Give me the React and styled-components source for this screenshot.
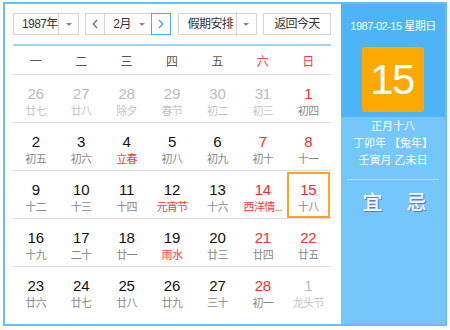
import React from "react";
import styled, { createGlobalStyle, css } from "styled-components";

const Global = createGlobalStyle`
  html, body { margin: 0; padding: 0; background: #fff; }
  body { font-family: "Liberation Sans", "Noto Sans CJK SC", sans-serif; }
  * { box-sizing: border-box; }
`;

const FONT = `"Liberation Sans", "Noto Sans CJK SC", sans-serif`;

const Frame = styled.div`
  margin: 2px 0 0 3px;
  width: 444px;
  height: 324px;
  border: 2px solid #68bdf7;
  display: flex;
  font-family: ${FONT};
`;

const Main = styled.div`
  width: 336px;
  padding: 9px 10px 0 8px;
  background: #fff;
`;

const Toolbar = styled.div`
  display: flex;
  justify-content: space-between;
  height: 22px;
`;

const Box = styled.div`
  display: flex;
  align-items: stretch;
  width: ${(p) => p.$w}px;
  height: 22px;
  border: 1px solid #d4d4d4;
  background: #fff;
  font-size: 12px;
  color: #333;
  letter-spacing: -0.6px;
  white-space: nowrap;
`;

const BoxText = styled.div`
  flex: 1;
  min-width: 0;
  display: flex;
  align-items: center;
  padding-left: ${(p) => p.$pl ?? 8}px;
  justify-content: ${(p) => (p.$center ? "center" : "flex-start")};
  line-height: 20px;
  white-space: nowrap;
`;

const ArrowCell = styled.div`
  flex: none;
  width: ${(p) => p.$w ?? 20}px;
  display: flex;
  align-items: center;
  justify-content: center;
  ${(p) => p.$divider && css`border-left: 1px solid #d4d4d4;`}
`;

const Tri = styled.span`
  width: 0;
  height: 0;
  border-left: 3px solid transparent;
  border-right: 3px solid transparent;
  border-top: 3px solid #888;
`;

const NavBtn = styled.div`
  flex: none;
  width: ${(p) => (p.$active ? 20 : 19)}px;
  margin: ${(p) => (p.$active ? "-1px -1px -1px 0" : "0")};
  display: flex;
  align-items: center;
  justify-content: center;
  ${(p) =>
    p.$active
      ? css`border: 1px solid #47aef5;`
      : css`border-right: 1px solid #d4d4d4;`}
`;

const Chevron = ({ dir, color }) => (
  <svg width="6" height="10" viewBox="0 0 6 10">
    <path
      d={dir === "left" ? "M5 1 L1.2 5 L5 9" : "M1 1 L4.8 5 L1 9"}
      fill="none"
      stroke={color}
      strokeWidth="1.1"
    />
  </svg>
);

const BlueRule = styled.div`
  margin-top: 9px;
  height: 2px;
  background: #9fd4f9;
`;

const Grid = styled.div`
  display: grid;
  grid-template-columns: repeat(7, 1fr);
`;

const HeadCell = styled.div`
  height: 29px;
  border-bottom: 1px solid #dcdcdc;
  display: flex;
  align-items: center;
  justify-content: center;
  padding-top: 1px;
  font-size: 12px;
  color: ${(p) => (p.$red ? "#ff3b3b" : "#555")};
`;

const DayCell = styled.div`
  position: relative;
  height: 48px;
  border-bottom: ${(p) => (p.$last ? "none" : "1px solid #dcdcdc")};
  display: flex;
  flex-direction: column;
  align-items: center;
  padding-top: 10px;
  ${(p) =>
    p.$selected &&
    css`
      &::after {
        content: "";
        position: absolute;
        top: 1px;
        left: 1px;
        right: 1px;
        bottom: 0;
        border: 2px solid #ffa41c;
      }
    `}
`;

const DayNum = styled.div`
  font-size: 15px;
  line-height: 18px;
  letter-spacing: -0.2px;
  margin-bottom: 1px;
  color: ${(p) => (p.$other ? "#bbb" : p.$red ? "#ff2b2b" : "#111")};
`;

const Lunar = styled.div`
  font-size: 11px;
  line-height: 14px;
  letter-spacing: -0.6px;
  white-space: nowrap;
  color: ${(p) => (p.$other ? "#c4c4c4" : p.$red ? "#ff3838" : "#888")};
`;

const Side = styled.div`
  flex: 1;
  display: flex;
  flex-direction: column;
  background: #74c6fb;
  color: #fff;
`;

const SideTop = styled.div`
  background: #4cb4f7;
  display: flex;
  flex-direction: column;
  align-items: center;
  padding: 14px 0 5px;
`;

const DateLine = styled.div`
  font-size: 11px;
  line-height: 16px;
  letter-spacing: -0.5px;
`;

const BigDay = styled.div`
  margin-top: 13px;
  width: 62px;
  height: 65px;
  background: #ffa800;
  border-radius: 3px;
  display: flex;
  align-items: center;
  justify-content: center;
  font-size: 42px;
  letter-spacing: -1.5px;
  color: #fff;
  padding-right: 2px;
`;

const SideInfo = styled.div`
  display: flex;
  flex-direction: column;
  align-items: center;
  padding-top: 1px;
`;

const InfoLine = styled.div`
  font-size: 11px;
  line-height: 17px;
  letter-spacing: 0px;
  white-space: nowrap;
`;

const SideRule = styled.div`
  margin: 10px 6px 0 6px;
  height: 1px;
  background: rgba(255, 255, 255, 0.45);
`;

const YiJi = styled.div`
  margin-top: 11px;
  display: flex;
  justify-content: center;
  gap: 24px;
  padding-left: 3px;
`;

const YiJiChar = styled.span`
  font-size: 20px;
  line-height: 24px;
  font-weight: 500;
  color: #fff;
  text-shadow: 1px 1px 0 #5b6fe8;
`;

const weekdays = ["一", "二", "三", "四", "五", "六", "日"];

const rows = [
  [
    ["26", "廿七", "o"],
    ["27", "廿八", "o"],
    ["28", "除夕", "o"],
    ["29", "春节", "o"],
    ["30", "初二", "o"],
    ["31", "初三", "o"],
    ["1", "初四", ""],
  ],
  [
    ["2", "初五", ""],
    ["3", "初六", ""],
    ["4", "立春", "h"],
    ["5", "初八", ""],
    ["6", "初九", ""],
    ["7", "初十", ""],
    ["8", "十一", ""],
  ],
  [
    ["9", "十二", ""],
    ["10", "十三", ""],
    ["11", "十四", ""],
    ["12", "元宵节", "h"],
    ["13", "十六", ""],
    ["14", "西洋情...", "h"],
    ["15", "十八", "s"],
  ],
  [
    ["16", "十九", ""],
    ["17", "二十", ""],
    ["18", "廿一", ""],
    ["19", "雨水", "h"],
    ["20", "廿三", ""],
    ["21", "廿四", ""],
    ["22", "廿五", ""],
  ],
  [
    ["23", "廿六", ""],
    ["24", "廿七", ""],
    ["25", "廿八", ""],
    ["26", "廿九", ""],
    ["27", "三十", ""],
    ["28", "初一", ""],
    ["1", "龙头节", "o"],
  ],
];

export default function App() {
  return (
    <>
      <Global />
      <Frame>
        <Main>
          <Toolbar>
            <Box $w={66}>
              <BoxText $pl={8}>1987年</BoxText>
              <ArrowCell $divider>
                <Tri />
              </ArrowCell>
            </Box>
            <Box $w={86}>
              <NavBtn>
                <Chevron dir="left" color="#666" />
              </NavBtn>
              <BoxText $pl={8}>2月</BoxText>
              <ArrowCell $w={18}>
                <Tri />
              </ArrowCell>
              <NavBtn $active>
                <Chevron dir="right" color="#2c9cf2" />
              </NavBtn>
            </Box>
            <Box $w={79}>
              <BoxText $pl={9}>假期安排</BoxText>
              <ArrowCell $divider>
                <Tri />
              </ArrowCell>
            </Box>
            <Box $w={68}>
              <BoxText $center $pl={0}>
                返回今天
              </BoxText>
            </Box>
          </Toolbar>
          <BlueRule />
          <Grid>
            {weekdays.map((w, i) => (
              <HeadCell key={w} $red={i >= 5}>
                {w}
              </HeadCell>
            ))}
            {rows.map((row, ri) =>
              row.map(([n, l, f], ci) => {
                const other = f === "o";
                return (
                  <DayCell
                    key={`${ri}-${ci}`}
                    $last={ri === rows.length - 1}
                    $selected={f === "s"}
                  >
                    <DayNum $other={other} $red={ci >= 5}>
                      {n}
                    </DayNum>
                    <Lunar $other={other} $red={f === "h"}>
                      {l}
                    </Lunar>
                  </DayCell>
                );
              })
            )}
          </Grid>
        </Main>
        <Side>
          <SideTop>
            <DateLine>1987-02-15 星期日</DateLine>
            <BigDay>15</BigDay>
          </SideTop>
          <SideInfo>
            <InfoLine>正月十八</InfoLine>
            <InfoLine>丁卯年 【兔年】</InfoLine>
            <InfoLine>壬寅月 乙未日</InfoLine>
          </SideInfo>
          <SideRule />
          <YiJi>
            <YiJiChar>宜</YiJiChar>
            <YiJiChar>忌</YiJiChar>
          </YiJi>
        </Side>
      </Frame>
    </>
  );
}
